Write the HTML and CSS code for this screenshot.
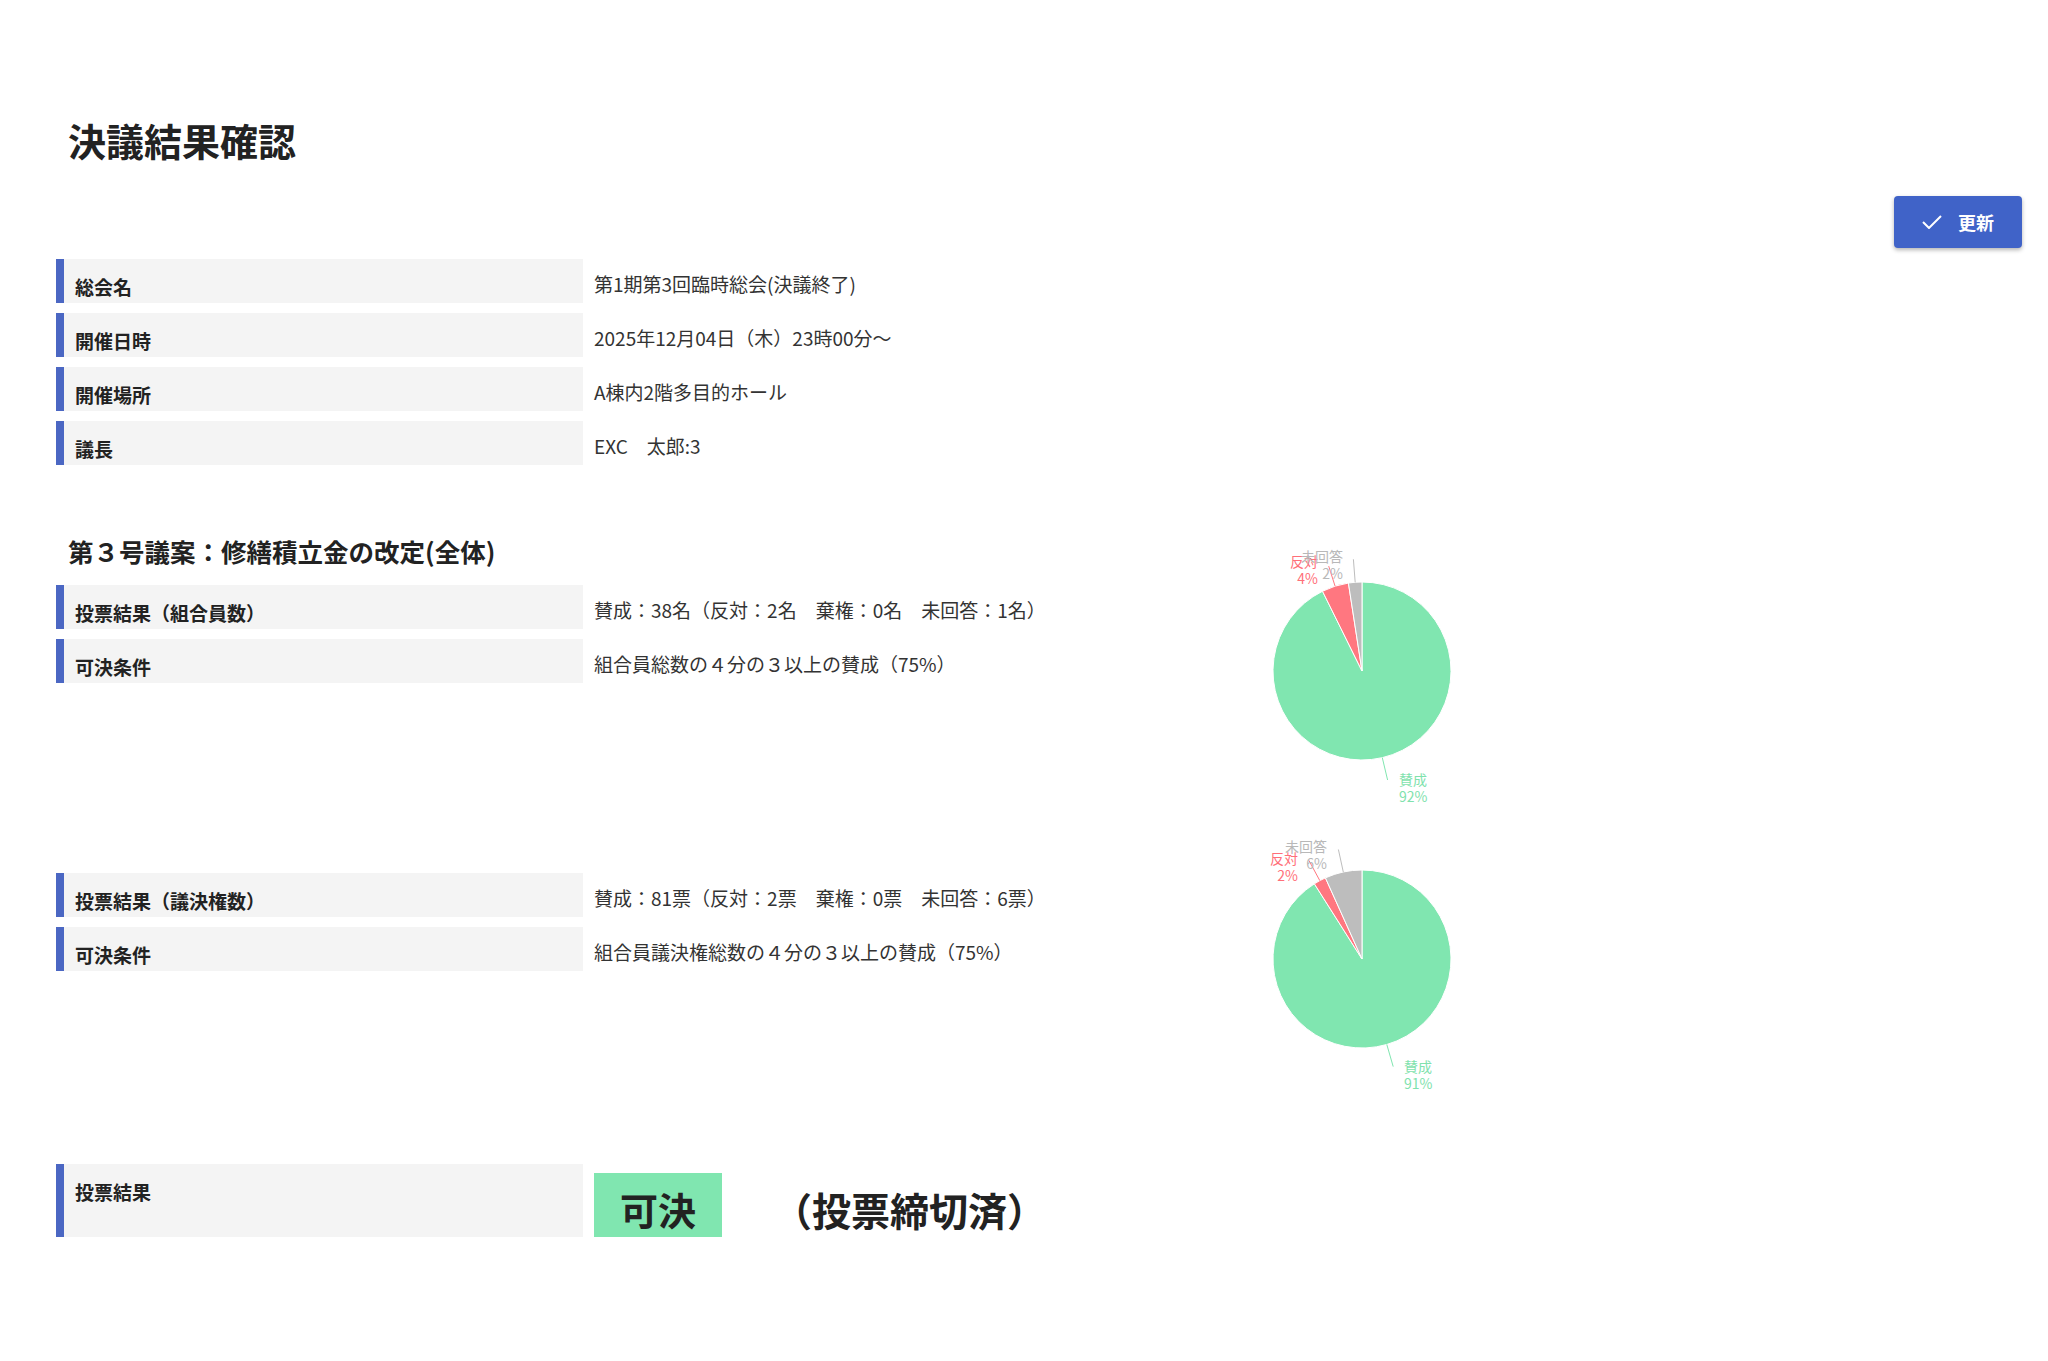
FILE: index.html
```html
<!DOCTYPE html>
<html lang="ja">
<head>
    <meta charset="UTF-8" />
    <meta name="viewport" content="width=device-width, initial-scale=1.0" />
    <title>決議結果確認</title>
    <link rel="stylesheet" href="styles.css">
</head>
<body>
<div class="page">
    <h1 class="page-title">決議結果確認</h1>

    <div class="toolbar">
        <button class="btn-update">
            <svg class="icon-check" width="20" height="14" viewBox="0 0 20 14">
                <polyline points="1,7 7,13 19,1" fill="none" stroke="#fff" stroke-width="2" />
            </svg>
            更新
        </button>
    </div>

    <div class="info-table">
        <div class="row">
            <div class="label">総会名</div>
            <div class="value">第1期第3回臨時総会(決議終了)</div>
        </div>
        <div class="row">
            <div class="label">開催日時</div>
            <div class="value">2025年12月04日（木）23時00分～</div>
        </div>
        <div class="row">
            <div class="label">開催場所</div>
            <div class="value">A棟内2階多目的ホール</div>
        </div>
        <div class="row">
            <div class="label">議長</div>
            <div class="value">EXC　太郎:3</div>
        </div>
    </div>

    <h2 class="agenda-title">第３号議案：修繕積立金の改定(全体)</h2>

    <div class="vote-block">
        <div class="vote-table">
            <div class="row">
                <div class="label">投票結果（組合員数）</div>
                <div class="value">賛成：38名（反対：2名　棄権：0名　未回答：1名）</div>
            </div>
            <div class="row">
                <div class="label">可決条件</div>
                <div class="value">組合員総数の４分の３以上の賛成（75%）</div>
            </div>
        </div>
        <svg class="pie" width="300" height="342" viewBox="0 0 300 342">
            <path d="M150 140 L150 51 A89 89 0 1 1 110.51 60.24 Z" fill="#80e6b0" stroke="#fff" stroke-width="1" />
            <path d="M150 140 L110.51 60.24 A89 89 0 0 1 136.42 52.04 Z" fill="#ff7780" stroke="#fff" stroke-width="1" />
            <path d="M150 140 L136.42 52.04 A89 89 0 0 1 150 51 Z" fill="#bdbdbd" stroke="#fff" stroke-width="1" />
            <line x1="123.1" y1="55.2" x2="116.7" y2="35.1" stroke="#ff7780" />
            <line x1="143.2" y1="51.3" x2="141.4" y2="28.3" stroke="#bdbdbd" />
            <line x1="170.3" y1="226.7" x2="175.6" y2="249" stroke="#80e6b0" />
            <text class="pie-label red" x="106" y="36" text-anchor="end">反対</text>
            <text class="pie-label red" x="106" y="53" text-anchor="end">4%</text>
            <text class="pie-label gray" x="131" y="31" text-anchor="end">未回答</text>
            <text class="pie-label gray" x="131" y="48" text-anchor="end">2%</text>
            <text class="pie-label green" x="187" y="254">賛成</text>
            <text class="pie-label green" x="187" y="271">92%</text>
        </svg>
    </div>

    <div class="vote-block">
        <div class="vote-table">
            <div class="row">
                <div class="label">投票結果（議決権数）</div>
                <div class="value">賛成：81票（反対：2票　棄権：0票　未回答：6票）</div>
            </div>
            <div class="row">
                <div class="label">可決条件</div>
                <div class="value">組合員議決権総数の４分の３以上の賛成（75%）</div>
            </div>
        </div>
        <svg class="pie" width="300" height="342" viewBox="0 0 300 342">
            <path d="M150 140 L150 51 A89 89 0 1 1 102.37 64.82 Z" fill="#80e6b0" stroke="#fff" stroke-width="1" />
            <path d="M150 140 L102.37 64.82 A89 89 0 0 1 113.42 58.87 Z" fill="#ff7780" stroke="#fff" stroke-width="1" />
            <path d="M150 140 L113.42 58.87 A89 89 0 0 1 150 51 Z" fill="#bdbdbd" stroke="#fff" stroke-width="1" />
            <line x1="107.8" y1="61.6" x2="96.9" y2="41.4" stroke="#ff7780" />
            <line x1="131.3" y1="53" x2="126.4" y2="30.5" stroke="#bdbdbd" />
            <line x1="174.8" y1="225.5" x2="181.2" y2="247.6" stroke="#80e6b0" />
            <text class="pie-label gray" x="115" y="33" text-anchor="end">未回答</text>
            <text class="pie-label gray" x="115" y="50" text-anchor="end">6%</text>
            <text class="pie-label red" x="86" y="45" text-anchor="end">反対</text>
            <text class="pie-label red" x="86" y="62" text-anchor="end">2%</text>
            <text class="pie-label green" x="192" y="253">賛成</text>
            <text class="pie-label green" x="192" y="270">91%</text>
        </svg>
    </div>

    <div class="row result-row">
        <div class="label">投票結果</div>
        <div class="result-value">
            <span class="badge-pass">可決</span>
            <span class="result-status">（投票締切済）</span>
        </div>
    </div>
</div>
</body>
</html>
```

FILE: styles.css
```css
body {
    margin: 0;
    background: #fff;
    color: #222;
    font-family: "Noto Sans CJK JP", "Noto Sans", sans-serif;
}

.page {
    padding: 117px 26px 60px 56px;
}

.page-title {
    margin: 0 0 0 12px;
    font-size: 38px;
    line-height: 46px;
    font-weight: 700;
    color: #222;
}

.toolbar {
    display: flex;
    justify-content: flex-end;
    margin-top: 33px;
}

.btn-update {
    display: flex;
    align-items: center;
    gap: 16px;
    height: 52px;
    padding: 0 28px 0 28px;
    background-color: #4063c8;
    color: #fff;
    border: none;
    border-radius: 4px;
    font-family: inherit;
    font-size: 18px;
    font-weight: 700;
    box-shadow: 0 2px 4px rgba(0,0,0,0.3);
    cursor: pointer;
}

.icon-check { display: block; }

.info-table {
    margin-top: 11px;
}

.row {
    display: flex;
    margin-bottom: 10px;
}

.label {
    box-sizing: border-box;
    width: 527px;
    flex: none;
    min-height: 44px;
    padding: 18px 11px 6px;
    border-left: 8px solid #4b67c3;
    background: #f4f4f4;
    font-size: 19px;
    line-height: 20px;
    font-weight: 700;
    color: #222;
}

.value {
    padding: 15px 11px 6px;
    font-size: 19px;
    line-height: 20px;
    color: #333;
}

.agenda-title {
    margin: 69px 0 17px 12px;
    font-size: 25.5px;
    line-height: 34px;
    font-weight: 700;
    color: #222;
}

.vote-block {
    display: flex;
    align-items: flex-start;
}

.vote-table {
    flex: 0 0 1156px;
}

.pie {
    display: block;
    margin-top: -54px;
}

.pie-label {
    font-family: "Noto Sans CJK JP", sans-serif;
    font-size: 14px;
}
.pie-label.red { fill: #ff6f79; }
.pie-label.gray { fill: #b8b8b8; }
.pie-label.green { fill: #7fe2ad; }

.result-row {
    margin-top: 3px;
}

.result-row .label {
    min-height: 73px;
}

.result-value {
    display: flex;
    align-items: flex-start;
    padding-left: 11px;
}

.badge-pass {
    margin-top: 9px;
    padding: 10px 26px 0;
    height: 54px;
    line-height: 52px;
    background: #80e6b0;
    font-size: 38px;
    font-weight: 700;
    color: #222;
}

.result-status {
    margin: 9px 0 0 51px;
    padding-top: 10px;
    line-height: 52px;
    font-size: 39px;
    font-weight: 700;
    color: #222;
}
```
